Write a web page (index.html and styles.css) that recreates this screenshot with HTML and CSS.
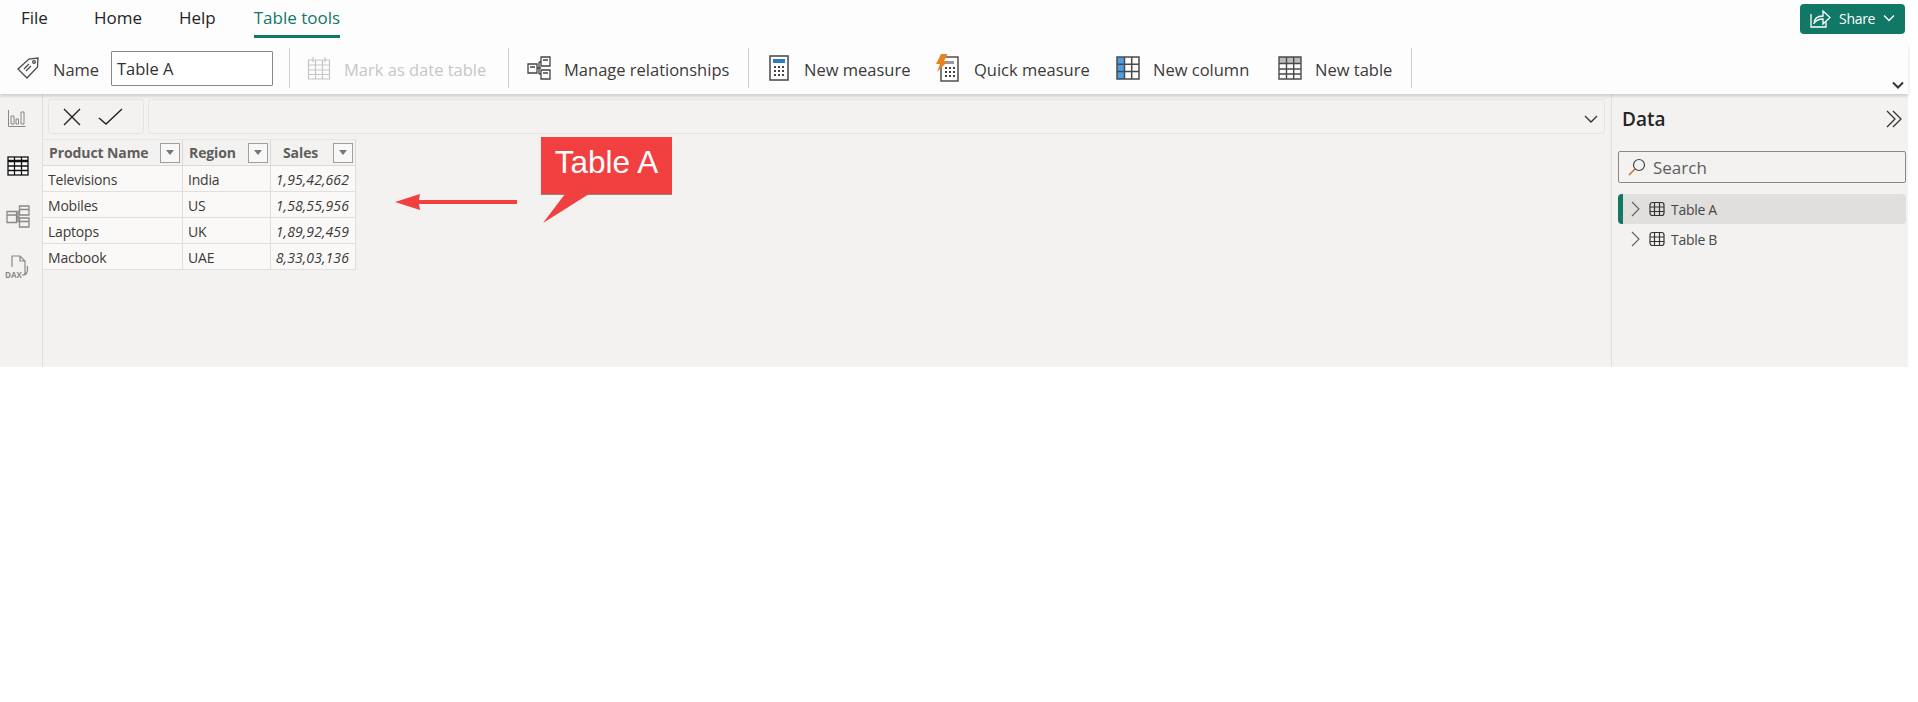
FILE: index.html
```html
<!DOCTYPE html>
<html lang="en">
<head>
<meta charset="utf-8">
<title>Table tools</title>
<link rel="stylesheet" href="styles.css">
</head>
<body>
<div class="app">
  <header class="tabs">
    <span class="tab tab-file">File</span>
    <span class="tab tab-home">Home</span>
    <span class="tab">Help</span>
    <span class="tab tab-active">Table tools</span>
    <button class="share">
      <svg width="22" height="22" viewBox="0 0 22 22" fill="none" stroke="#fff" stroke-width="1.3"><path d="M2 7v13h15v-5"/><path d="M5 17c0-6 3-8 9-8V4l7 6.500-7 6.500v-5c-4 0-7 1-9 4.500z"/></svg>
      <span>Share</span>
      <svg width="12" height="8" viewBox="0 0 12 8" fill="none" stroke="#fff" stroke-width="1.3"><path d="M1 1.500l5 5 5-5"/></svg>
    </button>
  </header>
  <section class="ribbon">
    <div class="item item-name">
      <svg width="24" height="24" viewBox="0 0 24 24" fill="none" stroke="#4a4a4a" stroke-width="1.300"><path d="M2 13L13 3l9-1-.5 9L11 22z"/><circle cx="18" cy="6" r="1.300"/><path d="M8 13l5-5M10 15l5-5"/></svg>
      <span>Name</span>
    </div>
    <input class="name-input" value="Table A" aria-label="Name">
    <i class="sep"></i>
    <div class="item item-date disabled">
      <svg width="24" height="24" viewBox="0 0 24 24" fill="none" stroke="#c8c6c4" stroke-width="1.200"><path d="M1.500 4h21v19h-21zM1.500 9h21M1.500 14h21M1.500 18.500h21M8.500 4v19M15.500 4v19M6 1v5M18 1v5"/></svg>
      <span>Mark as date table</span>
    </div>
    <i class="sep"></i>
    <div class="item item-rel">
      <svg width="24" height="24" viewBox="0 0 24 24" fill="none" stroke="#444" stroke-width="1.300"><path d="M1 8h9v9H1zM14 1h9v9h-9zM14 14h9v9h-9zM3 11h5M16 4h5M16 17h5M10 12h4M12 6v12M12 6h2M12 18h2"/></svg>
      <span>Manage relationships</span>
    </div>
    <i class="sep"></i>
    <div class="item item-measure">
      <svg width="20" height="26" viewBox="0 0 20 26" fill="none"><rect x="1" y="1" width="18" height="24" fill="#fff" stroke="#444" stroke-width="1.500"/><rect x="4" y="4" width="12" height="4" fill="#2b7cc4"/><path d="M5 11h2v2H5zM9 11h2v2H9zM13 11h2v2h-2zM5 15h2v2H5zM9 15h2v2H9zM13 15h2v2h-2zM5 19h2v2H5zM9 19h2v2H9zM13 19h2v2h-2z" fill="#444"/></svg>
      <span>New measure</span>
    </div>
    <div class="item item-quick">
      <svg width="24" height="28" viewBox="0 0 24 28" fill="none"><rect x="6" y="3" width="17" height="24" fill="#fff" stroke="#444" stroke-width="1.400"/><rect x="10" y="7" width="9" height="3" fill="#999"/><path d="M10 13h2v2h-2zM14 13h2v2h-2zM18 13h2v2h-2zM10 17h2v2h-2zM14 17h2v2h-2zM18 17h2v2h-2zM10 21h2v2h-2zM14 21h2v2h-2zM18 21h2v2h-2z" fill="#444"/><path d="M6 0h6.500L9 7h4L2 18l3-8H1z" fill="#e8821e"/></svg>
      <span>Quick measure</span>
    </div>
    <div class="item item-col">
      <svg width="24" height="24" viewBox="0 0 24 24" fill="none"><rect x="1" y="1" width="7.500" height="22" fill="#4aa0e6"/><path d="M1 1h22v22H1zM1 8.300h22M1 15.600h22M8.500 1v22M15.700 1v22" stroke="#4a4a4a" stroke-width="1.500"/></svg>
      <span>New column</span>
    </div>
    <div class="item item-table">
      <svg width="24" height="24" viewBox="0 0 24 24" fill="none"><rect x="1" y="1" width="22" height="6" fill="#bbb"/><path d="M1 1h22v22H1zM1 7.500h22M1 13h22M1 18h22M8.500 1v22M15.700 1v22" stroke="#4a4a4a" stroke-width="1.400"/></svg>
      <span>New table</span>
    </div>
    <i class="sep"></i>
    <svg class="ribbon-more" width="12" height="8" viewBox="0 0 12 8" fill="none" stroke="#333" stroke-width="2"><path d="M1 1.500l5 5 5-5"/></svg>
  </section>
  <main class="main">
    <nav class="rail">
      <svg class="rail-report" width="18" height="18" viewBox="0 0 18 18" fill="none" stroke="#8a8886"><path d="M.5 1v16.500h17M3 7h3v8H3zM8 10h2.500v5H8zM13 3h3v12h-3z"/></svg>
      <svg class="rail-table" width="22" height="20" viewBox="0 0 22 20" fill="none" stroke="#111" stroke-width="1.300"><rect x="1" y="1" width="20" height="18" fill="#fff"/><path d="M1 5h20" stroke-width="2.500"/><path d="M1 10h20M1 14.500h20M7.500 1v18M14.500 1v18"/></svg>
      <svg class="rail-model" width="24" height="23" viewBox="0 0 24 23" fill="none" stroke="#8a8886" stroke-width="1.300"><path d="M1 6.500h9.500v11H1zM1 10h9.500M13.500 1h9.500v9h-9.500zM13.500 4.500h9.500M13.500 13h9.500v9h-9.500zM13.500 16.500h9.500M10.500 12h3M12 5.500v12"/></svg>
      <div class="rail-dax">
        <svg width="22" height="22" viewBox="0 0 22 22" fill="none" stroke="#8a8886" stroke-width="1.200"><path d="M5 12V1h8l5 5v12c0 1-1 2-2 2h-1M13 1v5h5M20 11c1 3 1 6-2 9"/></svg>
        <span>DAX</span>
      </div>
    </nav>
    <div class="center">
      <div class="formula">
        <div class="formula-btns">
          <svg width="20" height="20" viewBox="0 0 20 20" fill="none" stroke="#222" stroke-width="1.400"><path d="M2 2l16 16M18 2L2 18"/></svg>
          <svg width="25" height="18" viewBox="0 0 25 18" fill="none" stroke="#222" stroke-width="1.400"><path d="M1 10l7 6L24 1"/></svg>
        </div>
        <div class="formula-input">
          <svg width="14" height="8" viewBox="0 0 14 8" fill="none" stroke="#333" stroke-width="1.300"><path d="M1 1l6 6 6-6"/></svg>
        </div>
      </div>
      <div class="grid">
        <div class="th th-product"><span>Product Name</span><b class="filter"></b></div>
        <div class="th th-region"><span>Region</span><b class="filter"></b></div>
        <div class="th th-sales"><span>Sales</span><b class="filter"></b></div>
        <div class="td">Televisions</div><div class="td">India</div><div class="td num">1,95,42,662</div>
        <div class="td">Mobiles</div><div class="td">US</div><div class="td num">1,58,55,956</div>
        <div class="td">Laptops</div><div class="td">UK</div><div class="td num">1,89,92,459</div>
        <div class="td">Macbook</div><div class="td">UAE</div><div class="td num">8,33,03,136</div>
      </div>
      <svg class="arrow" width="122" height="18" viewBox="0 0 122 18"><path d="M122 7H24L25 1 0 9l25 8-1-6h98z" fill="#f23f3f"/></svg>
      <div class="callout">Table A</div>
    </div>
    <aside class="panel">
      <div class="panel-head">
        <span>Data</span>
        <svg width="16" height="18" viewBox="0 0 16 18" fill="none" stroke="#333" stroke-width="1.300"><path d="M1 1l8 8-8 8M7 1l8 8-8 8"/></svg>
      </div>
      <div class="search">
        <svg width="18" height="18" viewBox="0 0 18 18" fill="none" stroke-width="1.200"><circle cx="11" cy="7" r="5.500" stroke="#444"/><path d="M7 11l-6 6" stroke="#b5651d"/></svg>
        <span>Search</span>
      </div>
      <div class="tree-row tree-active">
        <svg class="chev" width="9" height="16" viewBox="0 0 9 16" fill="none" stroke="#605e5c" stroke-width="1.100"><path d="M1 1l7 7-7 7"/></svg>
        <svg width="16" height="16" viewBox="0 0 16 16" fill="none" stroke="#333" stroke-width="1.200"><rect x="1" y="1.500" width="14" height="13" rx="2.500"/><path d="M1 6h14M1 10.500h14M5.500 1.500v13M10.500 1.500v13"/></svg>
        <span>Table A</span>
      </div>
      <div class="tree-row">
        <svg class="chev" width="9" height="16" viewBox="0 0 9 16" fill="none" stroke="#605e5c" stroke-width="1.100"><path d="M1 1l7 7-7 7"/></svg>
        <svg width="16" height="16" viewBox="0 0 16 16" fill="none" stroke="#333" stroke-width="1.200"><rect x="1" y="1.500" width="14" height="13" rx="2.500"/><path d="M1 6h14M1 10.500h14M5.500 1.500v13M10.500 1.500v13"/></svg>
        <span>Table B</span>
      </div>
    </aside>
  </main>
</div>
</body>
</html>
```
FILE: styles.css
```css
* { box-sizing: border-box; }
html, body { margin: 0; padding: 0; background: #fff; }
body { font-family: "Open Sans", "Noto Sans", sans-serif; color: #323130; overflow: hidden; }

.app { width: 1908px; height: 367px; display: flex; flex-direction: column; background: #f3f2f1; }

.tabs { height: 44px; padding-left: 21px; padding-right: 3px; display: flex; align-items: flex-start; background: #fdfdfd; font-size: 17px; color: #252423; }
.tab { margin-top: 6px; margin-right: 38px; height: 32px; line-height: 24px; white-space: nowrap; }
.tab-file { margin-right: 46px; }
.tab-home { margin-right: 37px; }
.tab-active { color: #117865; border-bottom: 3px solid #117865; font-weight: 500; }
.share { margin: 4px 0 0 auto; width: 105px; height: 30px; border: 0; border-radius: 4px; background: #117865; color: #fff; font: 14px "Open Sans", sans-serif; display: flex; align-items: center; padding: 0 0 2px 9px; gap: 8px; letter-spacing: -.3px; }

.ribbon { height: 50px; display: flex; align-items: center; background: #fdfdfd; box-shadow: 0 2px 3px rgba(0,0,0,.16); position: relative; font-size: 16.5px; color: #3b3a39; z-index: 1; padding-left: 16px; padding-bottom: 2px; }
.item { display: flex; align-items: center; white-space: nowrap; flex: none; }
.item svg { flex: none; }
.item span { position: relative; top: 1px; }
.item-name { gap: 13px; width: 95px; }
.name-input { width: 162px; height: 35px; border: 1px solid #8a8886; padding: 0 5px; font: 16.5px "Open Sans", sans-serif; color: #323130; background: #fff; outline: 0; border-radius: 1px; }
.sep { flex: none; width: 1px; height: 40px; background: #d2d0ce; margin-left: 16px; }
.item-date { margin-left: 17px; gap: 13px; width: 185px; }
.disabled { color: #c8c6c4; }
.item-rel { margin-left: 18px; gap: 13px; width: 205px; }
.item-measure { margin-left: 20px; gap: 15px; width: 148px; }
.item-quick { margin-left: 18px; gap: 15px; width: 162px; }
.item-col { margin-left: 19px; gap: 13px; width: 144px; }
.item-table { margin-left: 18px; gap: 13px; width: 117px; }
.ribbon-more { position: absolute; right: 4px; bottom: 5px; }

.main { flex: 1; display: flex; min-height: 0; }
.rail { width: 43px; flex: none; border-right: 1px solid #e1dfdd; display: flex; flex-direction: column; align-items: flex-start; padding: 15px 0 0 5px; }
.rail-report { margin-left: 3px; }
.rail-table { margin: 29px 0 0 2px; }
.rail-model { margin: 29px 0 0 1px; }
.rail-dax { margin-top: 27px; position: relative; width: 24px; height: 24px; }
.rail-dax svg { position: absolute; left: 2px; top: 0; }
.rail-dax span { position: absolute; left: 0; bottom: 0; font-size: 8px; line-height: 9px; font-weight: 700; color: #8a8886; background: #f3f2f1; }

.center { flex: 1; position: relative; min-width: 0; }
.formula { display: flex; gap: 4px; padding: 5px 6px 0 5px; height: 45px; }
.formula-btns { width: 96px; height: 35px; border: 1px solid #e6e4e2; border-radius: 3px; display: flex; align-items: center; gap: 16px; padding-left: 13px; }
.formula-input { flex: 1; height: 35px; border: 1px solid #e6e4e2; border-radius: 3px; display: flex; align-items: center; justify-content: flex-end; padding: 5px 6px 0 0; }

.grid { display: grid; grid-template-columns: 140px 88px 85px; grid-template-rows: 27px; grid-auto-rows: 26px; width: 313px; font-size: 14px; }
.th { display: flex; align-items: center; justify-content: space-between; padding: 0 2px 0 6px; background: #f3f2f1; border-right: 1px solid #dcdad8; border-bottom: 1px solid #dcdad8; border-top: 1px solid #e8e6e4; font-weight: 700; color: #605e5c; letter-spacing: -.1px; }
.th-sales { padding-left: 12px; }
.filter { width: 20px; height: 20px; flex: none; border: 1px solid #a19f9d; background: #f8f8f8; position: relative; }
.filter::after { content: ""; position: absolute; left: 5px; top: 6px; border: 4px solid transparent; border-top: 5px solid #797775; border-bottom: 0; }
.td { background: #faf9f8; border-right: 1px solid #e1dfdd; border-bottom: 1px solid #e1dfdd; padding-left: 5px; line-height: 27px; color: #3b3a39; letter-spacing: -.2px; }
.num { font-style: italic; text-align: right; padding: 0 6px 0 0; letter-spacing: .1px; }

.arrow { position: absolute; left: 352px; top: 99px; }
.callout { position: absolute; left: 498px; top: 43px; width: 131px; height: 57px; padding-top: 3px; background: #f23f3f; color: #fff; font: 31.5px/44px "Liberation Sans", sans-serif; text-align: center; box-shadow: 0 1px 0 #8a8886; }
.callout::after { content: ""; position: absolute; left: 2px; top: 57px; width: 46px; height: 30px; background: #f23f3f; clip-path: polygon(22px 0, 0 29px, 46px 0); }

.panel { width: 297px; flex: none; border-left: 1px solid #e1dfdd; padding: 0 2px 0 6px; font-size: 14px; }
.panel-head { height: 57px; display: flex; align-items: center; justify-content: space-between; padding: 0 4px 7px 4px; font-size: 19px; font-weight: 600; color: #252423; }
.search { height: 32px; border: 1px solid #8a8886; border-radius: 2px; display: flex; align-items: center; gap: 7px; padding-left: 9px; font-size: 17px; color: #605e5c; margin-bottom: 11px; }
.tree-row { height: 30px; display: flex; align-items: center; padding-left: 13px; letter-spacing: -.3px; color: #484644; }
.tree-row .chev { margin-right: 9px; }
.tree-row span { margin-left: 6px; }
.tree-active { background: #e1dfdd; border-left: 5px solid #117865; border-radius: 4px; padding-left: 8px; }
```
